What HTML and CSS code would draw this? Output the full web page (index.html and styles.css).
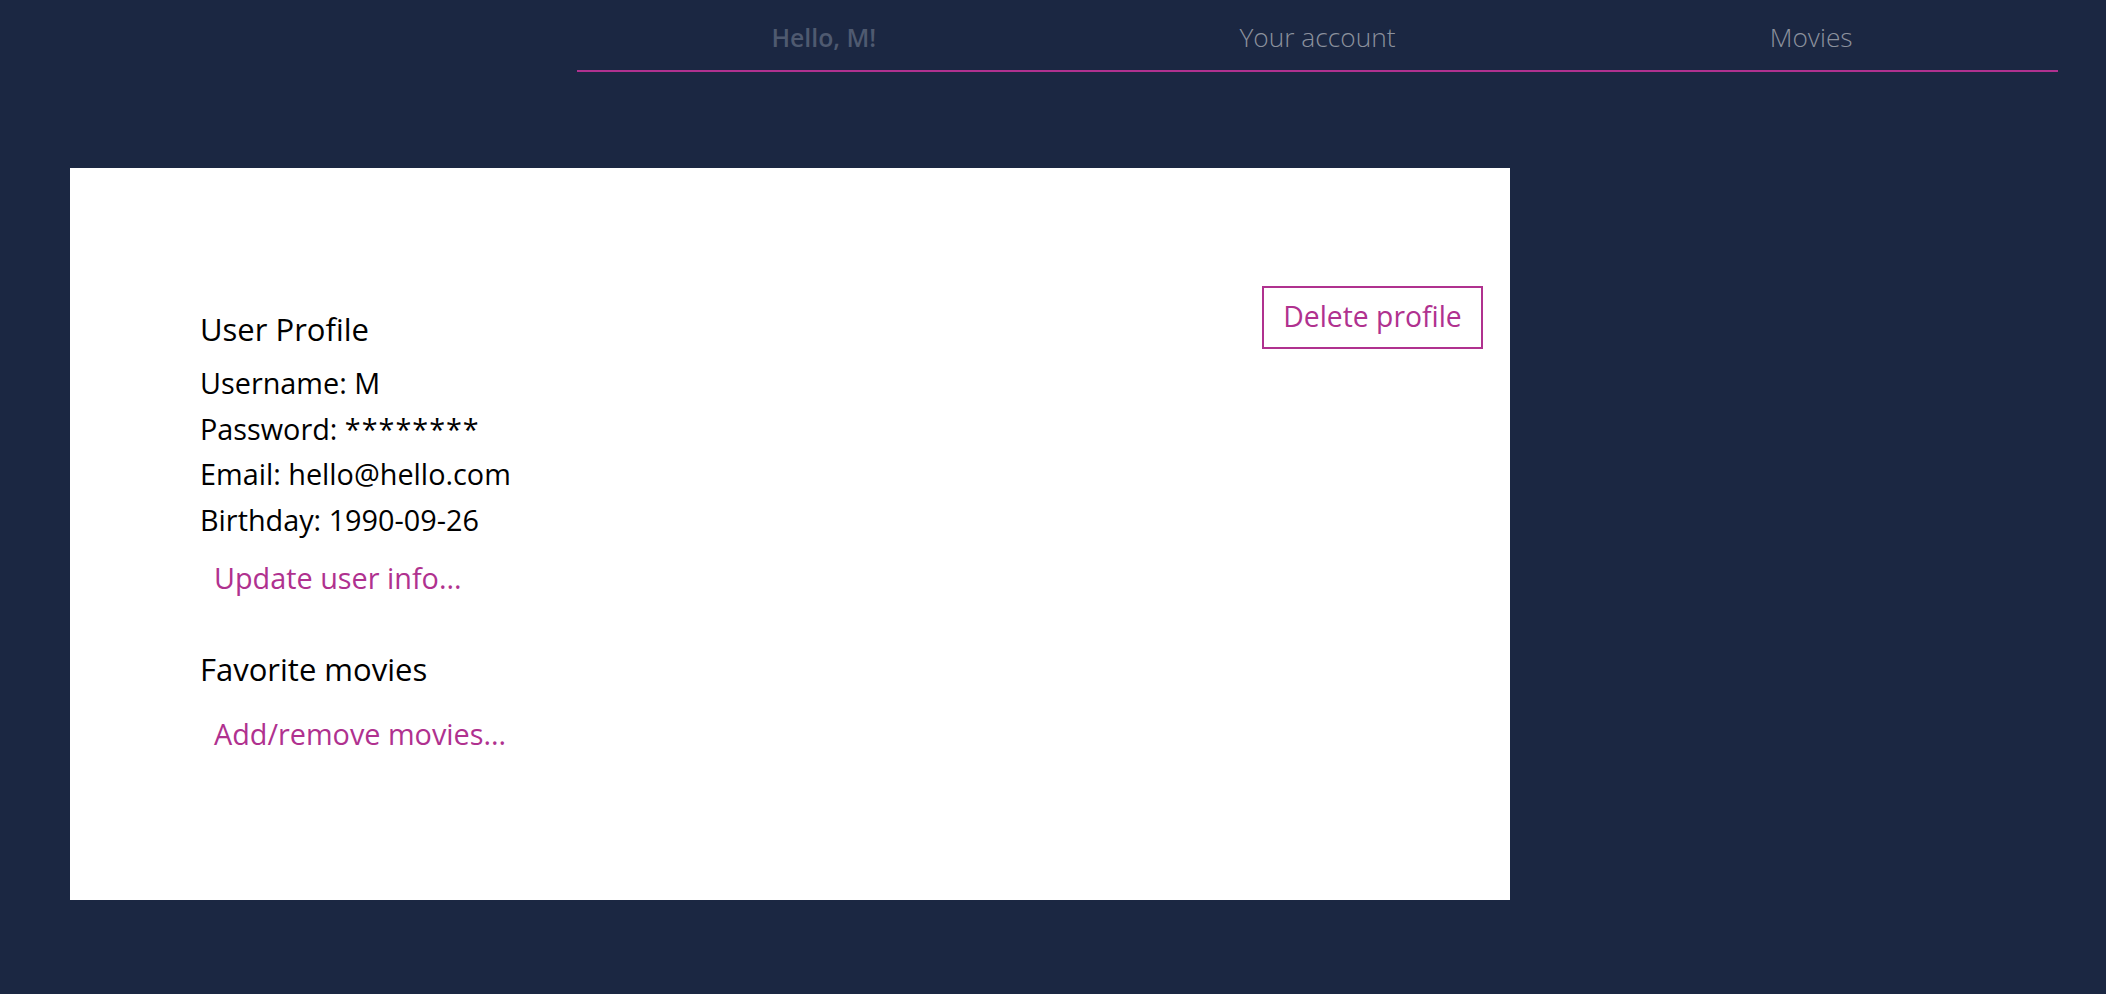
FILE: index.html
```html
<!DOCTYPE html>
<html lang="en">
<head>
<meta charset="utf-8">
<title>Your account</title>
<link rel="stylesheet" href="styles.css">
</head>
<body>
  <header class="topbar">
    <nav class="nav">
      <a class="nav-item nav-greeting">Hello, M!</a>
      <a class="nav-item">Your account</a>
      <a class="nav-item">Movies</a>
    </nav>
  </header>
  <main class="main">
    <section class="card">
      <div class="profile">
        <h2 class="heading">User Profile</h2>
        <p class="row">Username: M</p>
        <p class="row">Password: <span class="stars">********</span></p>
        <p class="row">Email: hello@hello.com</p>
        <p class="row">Birthday: 1990-09-26</p>
        <a class="link link-update">Update user info...</a>
        <h2 class="heading heading-fav">Favorite movies</h2>
        <a class="link link-movies">Add/remove movies...</a>
      </div>
      <button class="delete-btn">Delete profile</button>
    </section>
  </main>
</body>
</html>
```
FILE: styles.css
```css
* { box-sizing: border-box; }
html, body { margin: 0; padding: 0; }
body {
  background: #1b2742;
  font-family: "Open Sans", "Noto Sans", sans-serif;
  width: 2106px;
  min-height: 994px;
}
.topbar {
  display: flex;
  padding: 0 48px 0 577px;
}
.nav {
  flex: 1;
  display: flex;
  height: 72px;
  border-bottom: 2px solid #b0318f;
}
.nav-item {
  flex: 1;
  text-align: center;
  font-size: 26.3px;
  line-height: 74px;
  font-weight: 300;
  color: #8b919d;
  text-decoration: none;
}
.nav-greeting {
  font-size: 24.8px;
  font-weight: 600;
  color: #4f5a70;
}
.main {
  padding: 96px 0 0 70px;
}
.card {
  width: 1440px;
  height: 732px;
  background: #ffffff;
  display: flex;
  justify-content: space-between;
  align-items: flex-start;
  padding: 118px 27px 0 130px;
}
.profile {
  display: flex;
  flex-direction: column;
  align-items: flex-start;
  margin-top: 23px;
}
.heading {
  margin: 0 0 11px;
  font-size: 31px;
  line-height: 40px;
  font-weight: 400;
  color: #000;
}
.row {
  margin: 0;
  font-size: 28.8px;
  line-height: 45.7px;
  color: #000;
}
.stars {
  letter-spacing: 1px;
}
.link {
  color: #b0318f;
  font-size: 28.8px;
  line-height: 46px;
  padding-left: 14px;
  text-decoration: none;
}
.link-update { margin-top: 12px; margin-bottom: 48px; }
.heading-fav { margin-bottom: 22px; }
.delete-btn {
  background: #fff;
  border: 2px solid #b0318f;
  color: #b0318f;
  font-family: inherit;
  font-size: 28.3px;
  line-height: 57px;
  width: 221px;
  height: 63px;
  padding: 0 0 2px;
}
```
